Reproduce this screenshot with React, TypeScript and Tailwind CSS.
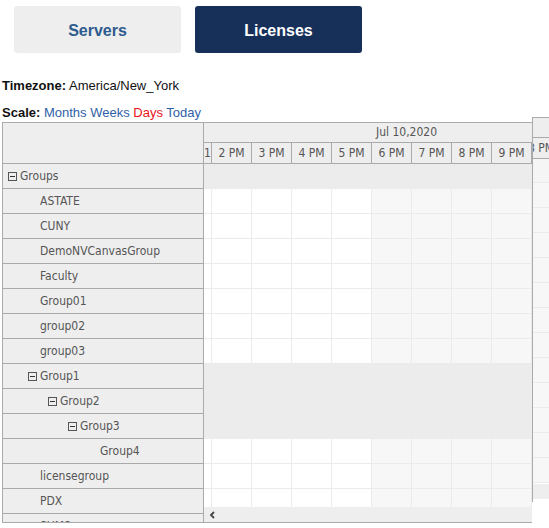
import React from "react";

type Row = { name: string; level: number; group?: boolean };

const rows: Row[] = [
  { name: "Groups", level: 0, group: true },
  { name: "ASTATE", level: 1 },
  { name: "CUNY", level: 1 },
  { name: "DemoNVCanvasGroup", level: 1 },
  { name: "Faculty", level: 1 },
  { name: "Group01", level: 1 },
  { name: "group02", level: 1 },
  { name: "group03", level: 1 },
  { name: "Group1", level: 1, group: true },
  { name: "Group2", level: 2, group: true },
  { name: "Group3", level: 3, group: true },
  { name: "Group4", level: 4 },
  { name: "licensegroup", level: 1 },
  { name: "PDX", level: 1 },
  { name: "SUMS", level: 1 },
];

const hours = ["2 PM", "3 PM", "4 PM", "5 PM", "6 PM", "7 PM", "8 PM", "9 PM"];

const leafIndent: Record<number, string> = { 1: "pl-[37px]", 2: "pl-[57px]", 3: "pl-[77px]", 4: "pl-[97px]" };
const groupIndent: Record<number, string> = { 0: "pl-[5px]", 1: "pl-[25px]", 2: "pl-[45px]", 3: "pl-[65px]" };

const grid = "font-['DejaVu_Sans_Condensed','Liberation_Sans',sans-serif] text-[12px] text-[#555]";

function MinusBox() {
  return (
    <span className="w-[9px] h-[9px] border border-[#555] flex items-center justify-center mr-[3px] shrink-0">
      <span className="w-[5px] h-px bg-[#333]" />
    </span>
  );
}

function TreeRow({ row }: { row: Row }) {
  const indent = row.group ? groupIndent[row.level] : leafIndent[row.level];
  return (
    <div className={`h-[25px] shrink-0 border-b border-[#aaa] bg-[#eeeeee] flex items-center ${indent}`}>
      {row.group && <MinusBox />}
      <span>{row.name}</span>
    </div>
  );
}

function BodyRow({ row }: { row: Row }) {
  if (row.group) return <div className="h-[25px] shrink-0 bg-[#ececec]" />;
  return (
    <div className="h-[25px] shrink-0 flex border-b border-[#ebebeb]">
      <div className="w-[8px] shrink-0 border-r border-[#ebebeb] bg-white" />
      {hours.map((h, i) => (
        <div key={h} className={`w-[40px] shrink-0 border-r border-[#ebebeb] ${i >= 4 ? "bg-[#f7f7f7]" : "bg-white"}`} />
      ))}
    </div>
  );
}

export default function App() {
  return (
    <div className="w-[549px] h-[528px] overflow-hidden bg-white">
      <div className="flex gap-[14px] pl-[14px] pt-[6px] font-['Liberation_Sans',Arial,sans-serif]">
        <button className="w-[167px] h-[47px] rounded-[3px] bg-[#eeeeee] text-[#2d5b8e] font-bold text-[16px] pt-[2px]">Servers</button>
        <button className="w-[167px] h-[47px] rounded-[3px] bg-[#17305a] text-white font-bold text-[16px] pt-[2px]">Licenses</button>
      </div>

      <div className="pl-[2px] font-['Liberation_Sans',Arial,sans-serif] text-[13px] text-[#111]">
        <div className="mt-[25px] leading-[16px]">
          <span className="font-bold">Timezone:</span> America/New_York
        </div>
        <div className="mt-[11px] leading-[16px]">
          <span className="font-bold">Scale:</span>{" "}
          <span className="text-[#2f5fa8]">Months</span> <span className="text-[#2f5fa8]">Weeks</span>{" "}
          <span className="text-[#e8141b]">Days</span> <span className="text-[#2f5fa8]">Today</span>
        </div>
      </div>

      {/* scheduler */}
      <div className={`flex mt-[1px] ml-[2px] ${grid}`}>
        {/* tree */}
        <div className="w-[202px] h-[401px] shrink-0 border border-[#aaa] flex flex-col overflow-hidden">
          <div className="h-[41px] shrink-0 border-b border-[#aaa] bg-[#eeeeee]" />
          {rows.map((r) => (
            <TreeRow key={r.name} row={r} />
          ))}
        </div>

        {/* timeline */}
        <div className="w-[328px] h-[401px] shrink-0 border-y border-[#aaa] flex flex-col overflow-hidden">
          <div className="h-[20px] shrink-0 border-b border-[#aaa] bg-[#eeeeee] pl-[172px] leading-[18px]">Jul 10,2020</div>
          <div className="h-[21px] shrink-0 border-b border-[#aaa] bg-[#eeeeee] flex">
            <div className="w-[8px] shrink-0 border-r border-[#aaa] overflow-hidden whitespace-nowrap leading-[20px]">1 PM</div>
            {hours.map((h) => (
              <div key={h} className="w-[40px] shrink-0 border-r border-[#aaa] text-center leading-[20px]">{h}</div>
            ))}
          </div>
          <div className="h-[343px] shrink-0 flex flex-col overflow-hidden">
            {rows.map((r) => (
              <BodyRow key={r.name} row={r} />
            ))}
          </div>
          <div className="h-[15px] shrink-0 bg-[#eeeeee] flex items-center pl-[5px]">
            <svg width="7" height="8" viewBox="0 0 7 8">
              <path d="M5 1 L2 4 L5 7" fill="none" stroke="#444" strokeWidth="1.8" />
            </svg>
          </div>
        </div>

        {/* clipped duplicate strip */}
        <div className="w-[30px] h-[385px] shrink-0 -mt-[5px] border-t border-l border-[#aaa] flex flex-col overflow-hidden">
          <div className="h-[20px] shrink-0 border-b border-[#aaa] bg-[#eeeeee]" />
          <div className="h-[21px] shrink-0 border-b border-[#aaa] bg-[#eeeeee] overflow-hidden whitespace-nowrap leading-[20px] -indent-[5px]">8 PM</div>
          <div className="h-[24px] shrink-0 border-b border-[#ebebeb] bg-[#f5f5f5]" />
          {Array.from({ length: 12 }).map((_, i) => (
            <div key={i} className="h-[25px] shrink-0 border-b border-[#ebebeb] bg-[#f7f7f7]" />
          ))}
          <div className="h-[1px] shrink-0" />
          <div className="h-[15px] shrink-0 bg-[#eeeeee]" />
        </div>
      </div>
    </div>
  );
}
